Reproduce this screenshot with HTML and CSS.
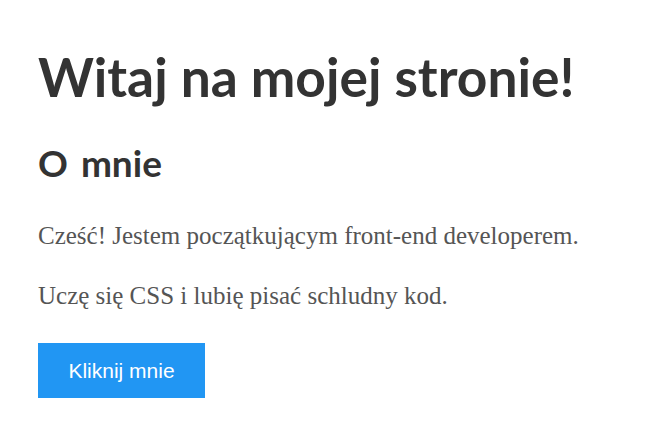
FILE: index.html
```html
<!DOCTYPE html>
<html lang="pl">
<head>
<meta charset="utf-8">
<title>Witaj</title>
<link rel="stylesheet" href="styles.css">
</head>
<body>
<main class="page">
  <h1 class="title">Witaj na mojej stronie!</h1>
  <h2 class="subtitle">O mnie</h2>
  <p class="text">Cześć! Jestem początkującym front-end developerem.</p>
  <p class="text">Uczę się CSS i lubię pisać schludny kod.</p>
  <button class="btn">Kliknij mnie</button>
</main>
</body>
</html>
```
FILE: styles.css
```css
html, body { margin: 0; padding: 0; background: #fff; }
.page {
  display: flex;
  flex-direction: column;
  align-items: flex-start;
  padding: 44px 38px 0;
}
.title {
  font-family: "Lato", sans-serif;
  font-weight: 700;
  font-size: 53.3px;
  line-height: 65px;
  color: #333;
  margin: 0 0 32px;
}
.subtitle {
  font-family: "Lato", sans-serif;
  font-weight: 700;
  font-size: 37px;
  line-height: 43px;
  word-spacing: 4px;
  color: #333;
  margin: 0 0 34px;
}
.text {
  font-family: "Liberation Serif", serif;
  font-size: 25px;
  line-height: 35px;
  color: #555;
  margin: 0 0 25px;
}
.btn {
  font-family: "Liberation Sans", sans-serif;
  font-size: 21px;
  color: #fff;
  background: #2196f3;
  border: 0;
  width: 167px;
  height: 55px;
  padding: 0;
  margin-top: 5px;
}
```
